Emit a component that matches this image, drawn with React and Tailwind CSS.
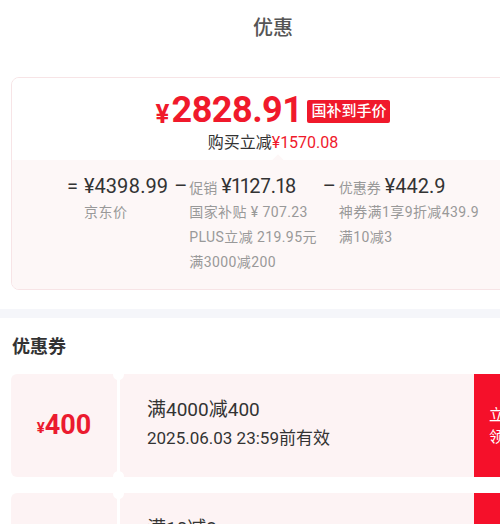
export default function App() {
  const font = "font-['Roboto','Noto_Sans_CJK_SC',sans-serif]";
  const sub = "text-[14px] leading-[25px] text-[#999] tracking-[0.4px]";
  const val = "text-[20px] leading-[28px] text-[#333] proportional-nums";
  return (
    <div className={`w-[500px] h-[524px] overflow-hidden bg-white ${font}`}>
      <div className="w-[546px]">
        <div className="h-[56px] flex items-center justify-center text-[20px] font-medium text-[#555]">
          优惠
        </div>

        <div className="mt-[21px] mx-[11px] border border-[#f7e4e6] rounded-[8px] overflow-hidden">
          <div className="bg-white flex flex-col items-center pt-[12px] pb-[6px]">
            <div className="flex items-center h-[40px]">
              <span className="text-[#f0192b] font-bold text-[26px] leading-none mt-[7px] mr-[2px]">¥</span>
              <span className="text-[#f0192b] font-bold text-[36px] leading-none tracking-[-0.5px]">2828.91</span>
              <span className="ml-[5px] bg-[#f0192b] text-white text-[15px] font-medium leading-[23px] px-[4px] rounded-[2px] mt-[2px]">
                国补到手价
              </span>
            </div>
            <div className="mt-[2px] text-[16px] leading-[22px] text-[#333]">
              购买立减<span className="text-[#f0192b]">¥1570.08</span>
            </div>
          </div>
          <div className="relative bg-[#fdf7f7] pt-[12px] pb-[14px]">
            <div className="absolute left-[262px] top-[-4px] w-[8px] h-[8px] rotate-45 bg-[#fdf7f7]" />
            <div className="flex justify-center gap-[6px]">
              <div className="flex">
                <span className="text-[20px] leading-[28px] text-[#333] w-[17px]">=</span>
                <div className="flex flex-col">
                  <span className={val}>¥4398.99</span>
                  <span className={sub}>京东价</span>
                </div>
              </div>
              <div className="flex">
                <span className="text-[20px] leading-[28px] text-[#333] w-[15px]">–</span>
                <div className="flex flex-col">
                  <div className="flex items-baseline">
                    <span className="text-[14px] text-[#999] mr-[4px]">促销</span>
                    <span className={val}>¥1127.18</span>
                  </div>
                  <span className={sub}>国家补贴 ¥ 707.23</span>
                  <span className={sub}>PLUS立减 219.95元</span>
                  <span className={sub}>满3000减200</span>
                </div>
              </div>
              <div className="flex">
                <span className="text-[20px] leading-[28px] text-[#333] w-[16px]">–</span>
                <div className="flex flex-col">
                  <div className="flex items-baseline">
                    <span className="text-[14px] text-[#999] mr-[4px]">优惠券</span>
                    <span className={val}>¥442.9</span>
                  </div>
                  <span className={sub}>神券满1享9折减439.9</span>
                  <span className={sub}>满10减3</span>
                </div>
              </div>
            </div>
          </div>
        </div>

        <div className="mt-[19px] h-[9px] bg-[#f5f6fa]" />

        <div className="pt-[17px] px-[12px] text-[18px] leading-[24px] font-bold text-[#333]">优惠券</div>

        <div className="mt-[15px] mx-[11px] flex flex-col gap-[16px]">
          {[
            { amt: "400", title: "满4000减400", date: "2025.06.03 23:59前有效" },
            { amt: "3", title: "满10减3", date: "2025.06.03 23:59前有效" },
          ].map((c, i) => (
            <div key={i} className="relative flex h-[103px]">
              <div className="w-[106px] bg-[#fdf3f4] rounded-l-[6px] flex items-center justify-center text-[#eb1b2f] font-bold">
                <span className="text-[15px] mt-[5px]">¥</span>
                <span className="text-[27px] leading-none">{c.amt}</span>
              </div>
              <div className="w-[3px] bg-white" />
              <div className="flex-1 bg-[#fdf3f4] pl-[27px] pt-[23px]">
                <div className="text-[19px] leading-[26px] text-[#333]">{c.title}</div>
                <div className="mt-[3px] text-[17px] leading-[24px] text-[#333]">{c.date}</div>
              </div>
              <div className="w-[61px] bg-[#f5102a] rounded-r-[6px] flex flex-col justify-center pl-[15px] text-white text-[15px] leading-[22px]">
                <span>立</span>
                <span>领</span>
              </div>
              <div className="absolute left-[102px] top-[-5px] w-[11px] h-[11px] rounded-full bg-white" />
              <div className="absolute left-[102px] bottom-[-5px] w-[11px] h-[11px] rounded-full bg-white" />
            </div>
          ))}
        </div>
      </div>
    </div>
  );
}
